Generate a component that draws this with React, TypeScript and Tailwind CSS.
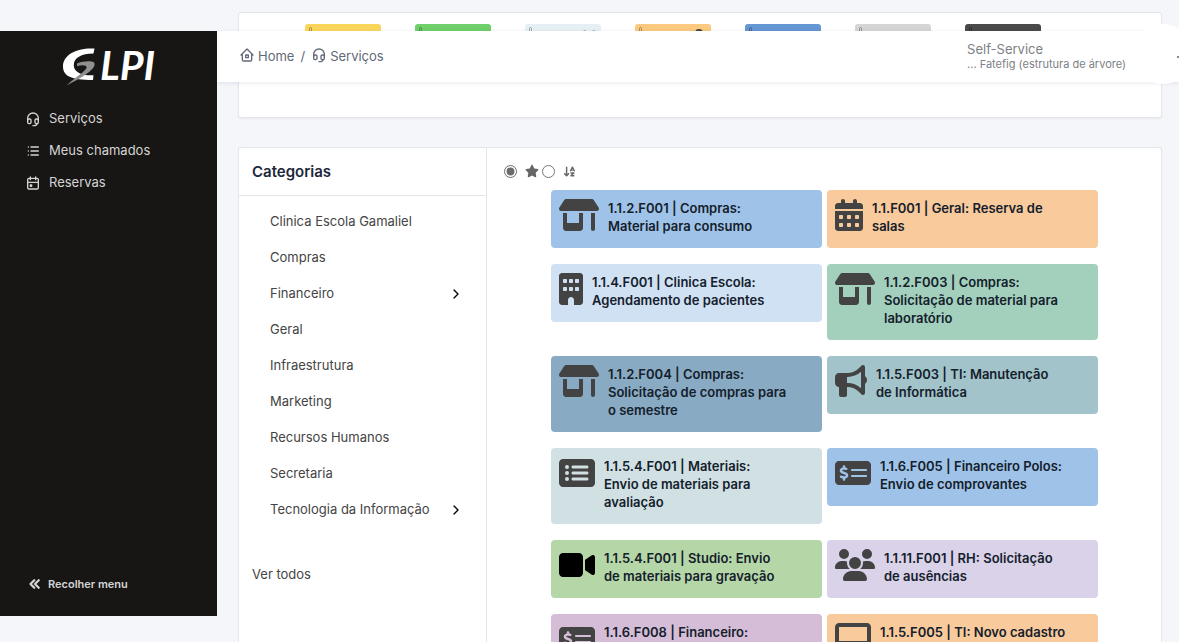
import type { ComponentType } from "react";
import {
  FaArrowDownAZ,
  FaBuilding,
  FaBullhorn,
  FaCalendarDays,
  FaDesktop,
  FaMoneyCheckDollar,
  FaRectangleList,
  FaShop,
  FaStar,
  FaUser,
  FaUsers,
  FaVideo,
} from "react-icons/fa6";
import {
  TbCalendarEvent,
  TbChevronRight,
  TbChevronsLeft,
  TbHeadset,
  TbHome2,
  TbList,
} from "react-icons/tb";

type Icon = ComponentType<{ className?: string }>;

const menu: { label: string; icon: Icon }[] = [
  { label: "Serviços", icon: TbHeadset },
  { label: "Meus chamados", icon: TbList },
  { label: "Reservas", icon: TbCalendarEvent },
];

const favourites: { color: string; icon?: Icon }[] = [
  { color: "bg-[#fbd65c]" },
  { color: "bg-[#6fcf6b]" },
  { color: "bg-[#e6f0f4]", icon: FaUsers },
  { color: "bg-[#fbc97f]", icon: FaUser },
  { color: "bg-[#6497d3]" },
  { color: "bg-[#d5d5d5]" },
  { color: "bg-[#4a4a4a]" },
];

const categories: { label: string; nested?: boolean }[] = [
  { label: "Clinica Escola Gamaliel" },
  { label: "Compras" },
  { label: "Financeiro", nested: true },
  { label: "Geral" },
  { label: "Infraestrutura" },
  { label: "Marketing" },
  { label: "Recursos Humanos" },
  { label: "Secretaria" },
  { label: "Tecnologia da Informação", nested: true },
];

const services: { title: string; icon: Icon; size: string; color: string }[] = [
  { title: "1.1.2.F001 | Compras:\nMaterial para consumo", icon: FaShop, size: "w-10", color: "bg-[#9fc3e8] text-[#434343]" },
  { title: "1.1.F001 | Geral: Reserva de\nsalas", icon: FaCalendarDays, size: "w-7", color: "bg-[#f8ca9c] text-[#434343]" },
  { title: "1.1.4.F001 | Clinica Escola:\nAgendamento de pacientes", icon: FaBuilding, size: "w-6", color: "bg-[#cfe1f3] text-[#434343]" },
  { title: "1.1.2.F003 | Compras:\nSolicitação de material para\nlaboratório", icon: FaShop, size: "w-10", color: "bg-[#a3d0bd] text-[#434343]" },
  { title: "1.1.2.F004 | Compras:\nSolicitação de compras para\no semestre", icon: FaShop, size: "w-10", color: "bg-[#88aac2] text-[#434343]" },
  { title: "1.1.5.F003 | TI: Manutenção\nde Informática", icon: FaBullhorn, size: "w-8", color: "bg-[#a2c3c9] text-[#434343]" },
  { title: "1.1.5.4.F001 | Materiais:\nEnvio de materiais para\navaliação", icon: FaRectangleList, size: "w-9", color: "bg-[#d0e0e3] text-[#434343]" },
  { title: "1.1.6.F005 | Financeiro Polos:\nEnvio de comprovantes", icon: FaMoneyCheckDollar, size: "w-9", color: "bg-[#9fc3e8] text-[#434343]" },
  { title: "1.1.5.4.F001 | Studio: Envio\nde materiais para gravação", icon: FaVideo, size: "w-9", color: "bg-[#b5d7a8] text-black" },
  { title: "1.1.11.F001 | RH: Solicitação\nde ausências", icon: FaUsers, size: "w-10", color: "bg-[#d9d2e9] text-[#434343]" },
  { title: "1.1.6.F008 | Financeiro:", icon: FaMoneyCheckDollar, size: "w-9", color: "bg-[#d5bdd8] text-[#434343]" },
  { title: "1.1.5.F005 | TI: Novo cadastro", icon: FaDesktop, size: "w-9", color: "bg-[#f8ca9c] text-[#434343]" },
];

function Logo() {
  return (
    <a href="#" aria-label="GLPI" className="flex items-start gap-0.5 pt-4 pl-[62px] text-white">
      <svg viewBox="0 0 36 40" className="h-10 w-9 shrink-0" aria-hidden="true">
        <path d="M32.5 1.500C15 .5 1 7.500 1 19.500 1 29 9 33 31 33L31.500 28.200C26 28.400 22 28 19.500 27 14 25 11.800 22 11.800 18 11.800 11 19 6.500 31.500 6.500Z" fill="#fff" />
        <path d="M15 16.500C20 14.300 28 13.500 31.500 15 34.500 17.500 31 22.500 25 26.500 19 31 12 34.500 4.500 38.500 10 33.500 16 29 20.500 25.500 24 22.500 26 20 23.500 18.800 21.500 17.800 18 18.200 15 19.200Z" fill="#8f8f8f" />
      </svg>
      <span className="font-['Lato'] text-[41px] leading-9 font-bold italic">LPI</span>
    </a>
  );
}

function Sidebar() {
  return (
    <aside className="z-10 mt-[31px] mb-[26px] flex w-[217px] shrink-0 flex-col bg-[#171614] text-[#d4d4d4]">
      <Logo />
      <nav className="mt-4 flex flex-col">
        {menu.map(({ label, icon: MenuIcon }) => (
          <a key={label} href="#" className="flex h-8 items-center gap-2 pl-[25px] text-[13px]">
            <MenuIcon className="size-4" />
            {label}
          </a>
        ))}
      </nav>
      <button type="button" className="mt-auto mb-5 flex items-center gap-1 pl-[26px] text-[11px] leading-6 font-semibold">
        <TbChevronsLeft className="size-[18px] stroke-3" />
        Recolher menu
      </button>
    </aside>
  );
}

function TopBar() {
  return (
    <header className="absolute inset-x-0 top-[31px] flex h-[51px] items-center justify-between bg-white pr-[53px] pl-[22px] text-[#626976] shadow-[0_1px_4px_rgba(30,41,59,0.1)]">
      <nav aria-label="breadcrumb" className="flex items-center text-[13px]">
        <a href="#" className="flex items-center gap-[3px]">
          <TbHome2 className="mb-[3px] size-4" />
          Home
        </a>
        <span className="px-1.5">/</span>
        <a href="#" className="flex items-center gap-[3px]">
          <TbHeadset className="mb-[3px] size-4" />
          Serviços
        </a>
      </nav>
      <div className="pb-0.5 text-[#7b7f86]">
        <div className="text-[13px] leading-4">Self-Service</div>
        <div className="text-[11px] leading-[14px]">... Fatefig (estrutura de árvore)</div>
      </div>
      <span className="absolute -top-[7px] -right-[14px] size-[60px] rounded-full bg-white" />
      <span className="absolute top-[25px] right-0 h-[2px] w-[2px] bg-[#8a8a8a]" />
    </header>
  );
}

export default function App() {
  return (
    <div className="relative flex h-screen overflow-hidden bg-[#f4f6fa] font-['Inter',sans-serif] text-[#1d273b]">
      <Sidebar />
      <div className="relative min-w-0 flex-1">
        <main className="flex h-full flex-col gap-[29px] pt-3 pr-[17px] pl-[21px]">
          <section className="flex h-[106px] shrink-0 items-start gap-[34px] rounded-[3px] border border-[#e3e6ec] bg-white pt-[11px] pl-[66px] shadow-xs">
            {favourites.map(({ color, icon: FavouriteIcon }) => (
              <div key={color} className={`flex h-10 w-19 justify-between rounded-t-[3px] px-1 pt-[3px] ${color}`}>
                <span className="h-2 w-[3px] rounded-[2px] border border-black/30" />
                {FavouriteIcon && <FavouriteIcon className="mt-[2px] size-4 text-[#434343]" />}
              </div>
            ))}
          </section>
          <section className="flex min-h-0 flex-1 rounded-t-[3px] border border-b-0 border-[#e3e6ec] bg-white">
            <div className="w-[248px] shrink-0 border-r border-[#e3e6ec]">
              <h2 className="flex h-12 items-center border-b border-[#e3e6ec] pt-0.5 pl-[13px] text-[15px] font-semibold">Categorias</h2>
              <ul className="pt-2 text-[13px] text-[#444]">
                {categories.map(({ label, nested }) => (
                  <li key={label} className="flex h-9 items-center justify-between pr-[22px] pl-[31px]">
                    <a href="#">{label}</a>
                    {nested && (
                      <button type="button" aria-label={label}>
                        <TbChevronRight className="size-4 text-black" />
                      </button>
                    )}
                  </li>
                ))}
              </ul>
              <a href="#" className="mt-9 block pl-[13px] text-[13px] leading-5 text-[#444]">Ver todos</a>
            </div>
            <div className="min-w-0 flex-1">
              <div className="flex h-[42px] items-center gap-2 pt-1 pl-[17px] text-[#666]">
                <input type="radio" name="sort" id="sort-popular" defaultChecked className="size-[13px] accent-[#6b6b6b]" />
                <label htmlFor="sort-popular" aria-label="Popular"><FaStar className="size-[14px]" /></label>
                <input type="radio" name="sort" id="sort-name" className="-ml-[5px] size-[13px]" />
                <label htmlFor="sort-name" aria-label="A-Z"><FaArrowDownAZ className="size-[13px]" /></label>
              </div>
              <div className="grid grid-cols-2 items-start gap-x-[5px] gap-y-4 pr-[63px] pl-16">
                {services.map(({ title, icon: ServiceIcon, size, color }) => (
                  <a key={title} href="#" className={`flex min-h-[58px] gap-[9px] rounded px-2 pt-[9px] pb-[13px] ${color}`}>
                    <ServiceIcon className={`h-8 shrink-0 ${size}`} />
                    <span className="text-[13px] leading-[18px] font-semibold whitespace-pre-line text-[#14202b]">{title}</span>
                  </a>
                ))}
              </div>
            </div>
          </section>
        </main>
        <TopBar />
      </div>
    </div>
  );
}
